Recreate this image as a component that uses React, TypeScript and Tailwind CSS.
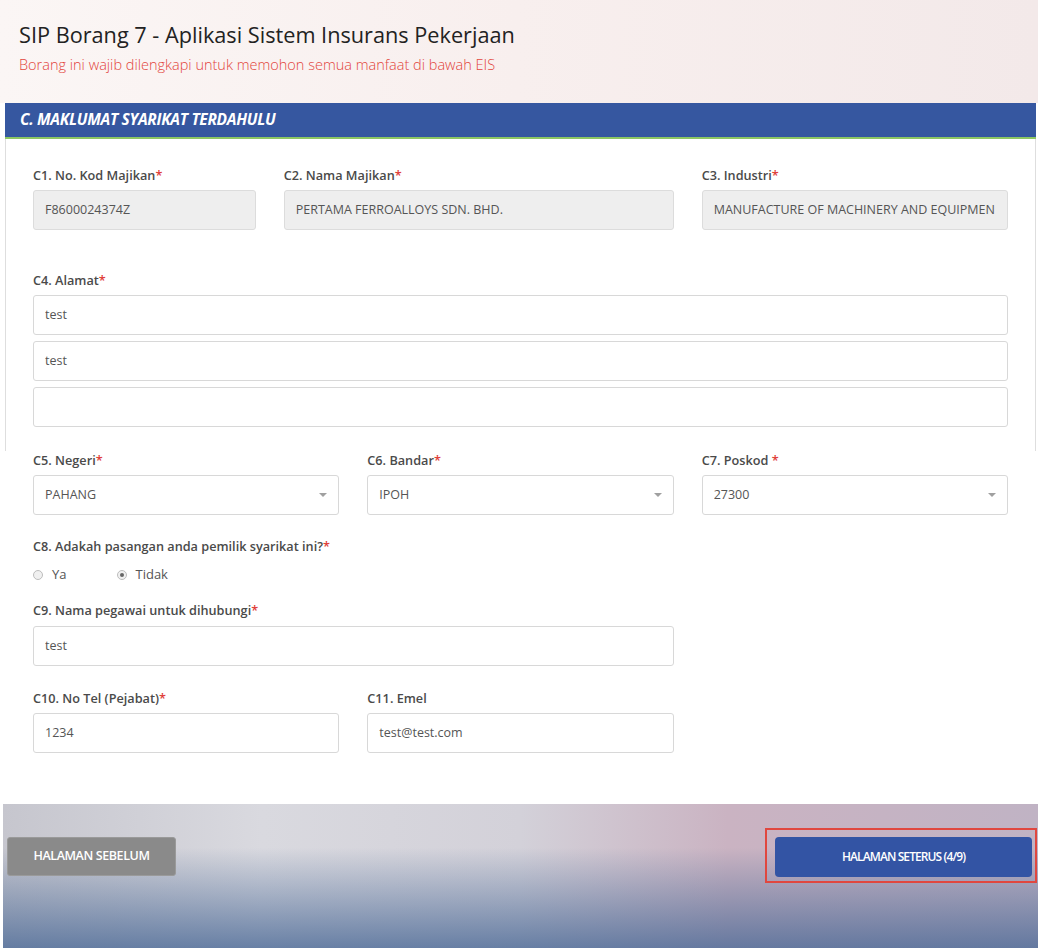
import React from 'react';

const font = { fontFamily: '"Open Sans", "Noto Sans", Arial, sans-serif' };

function Label({ text, required = true, gap = false }: { text: string; required?: boolean; gap?: boolean }) {
  return (
    <div className="text-[12.7px] leading-[18px] font-semibold text-[#4a4a4a] mb-[6px] whitespace-nowrap">
      {text}
      {required && <span className="text-[#e0403a]">{gap ? ' *' : '*'}</span>}
    </div>
  );
}

function Input({ value, disabled = false, select = false }: { value: string; disabled?: boolean; select?: boolean }) {
  return (
    <div
      className={
        'h-[40px] rounded-[3px] border flex items-center px-[11px] text-[12.5px] text-[#555] ' +
        (disabled ? 'bg-[#eeeeee] border-[#dcdcdc]' : 'bg-white border-[#d8d8d8]')
      }
    >
      <span className="flex-1 whitespace-nowrap overflow-hidden">{value}</span>
      {select && (
        <svg width="8" height="4" viewBox="0 0 8 4" className="ml-2">
          <path d="M0 0h8L4 4z" fill="#a0a0a0" />
        </svg>
      )}
    </div>
  );
}

function Radio({ label, checked = false }: { label: string; checked?: boolean }) {
  return (
    <label className="flex items-center gap-[9px] text-[13px] text-[#555]">
      <span className="w-[10px] h-[10px] rounded-full border border-[#bdbdbd] bg-[#f0f0f0] flex items-center justify-center">
        {checked && <span className="w-[4px] h-[4px] rounded-full bg-[#666]" />}
      </span>
      {label}
    </label>
  );
}

export default function App() {
  return (
    <div className="w-[1038px] min-h-[948px] bg-white" style={font}>
      {/* page header */}
      <div className="h-[103px] bg-linear-to-r from-[#fbf6f5] via-[#f8efee] to-[#f3e9e9] pt-[19px] px-[19px]">
        <h1 className="text-[21.7px] leading-[32px] text-[#222]">SIP Borang 7 - Aplikasi Sistem Insurans Pekerjaan</h1>
        <p className="text-[14.5px] leading-[20px] text-[#e2453c] font-light mt-[4px]">
          Borang ini wajib dilengkapi untuk memohon semua manfaat di bawah EIS
        </p>
      </div>

      <div className="ml-[5px] mr-[2px]">
        <div className="h-[36px] bg-[#3657a0] border-b-[2px] border-[#8dc763] flex items-center px-[15px]">
          <span className="text-white text-[15.5px] font-bold italic tracking-[-0.3px]">C. MAKLUMAT SYARIKAT TERDAHULU</span>
        </div>

        <div className="border-x border-[#dedede] px-[27px] pt-[27px] pb-[24px]">
          <div className="grid grid-cols-12 gap-x-[28px]">
            <div className="col-span-3">
              <Label text="C1. No. Kod Majikan" />
              <Input value="F8600024374Z" disabled />
            </div>
            <div className="col-span-5">
              <Label text="C2. Nama Majikan" />
              <Input value="PERTAMA FERROALLOYS SDN. BHD." disabled />
            </div>
            <div className="col-span-4">
              <Label text="C3. Industri" />
              <Input value="MANUFACTURE OF MACHINERY AND EQUIPMEN" disabled />
            </div>
          </div>

          <div className="mt-[41px]">
            <Label text="C4. Alamat" />
            <div className="flex flex-col gap-[6px]">
              <Input value="test" />
              <Input value="test" />
              <Input value="" />
            </div>
          </div>
        </div>

        <div className="px-[28px] pb-[51px]">
          <div className="grid grid-cols-12 gap-x-[28px]">
            <div className="col-span-4">
              <Label text="C5. Negeri" />
              <Input value="PAHANG" select />
            </div>
            <div className="col-span-4">
              <Label text="C6. Bandar" />
              <Input value="IPOH" select />
            </div>
            <div className="col-span-4">
              <Label text="C7. Poskod" gap />
              <Input value="27300" select />
            </div>
          </div>

          <div className="mt-[22px]">
            <Label text="C8. Adakah pasangan anda pemilik syarikat ini?" />
            <div className="flex items-center gap-[50px] mt-[10px] h-[20px]">
              <Radio label="Ya" />
              <Radio label="Tidak" checked />
            </div>
          </div>

          <div className="grid grid-cols-12 gap-x-[28px] mt-[16px]">
            <div className="col-span-8">
              <div className="pb-[1px]">
                <Label text="C9. Nama pegawai untuk dihubungi" />
              </div>
              <Input value="test" />
            </div>
          </div>

          <div className="grid grid-cols-12 gap-x-[28px] mt-[23px]">
            <div className="col-span-4">
              <Label text="C10. No Tel (Pejabat)" />
              <Input value="1234" />
            </div>
            <div className="col-span-4">
              <Label text="C11. Emel" required={false} />
              <Input value="test@test.com" />
            </div>
          </div>
        </div>
      </div>

      {/* footer navigation */}
      <div className="ml-[3px] h-[145px] bg-[linear-gradient(180deg,rgba(255,255,255,0)_30%,rgba(75,105,150,0.8)_100%),linear-gradient(90deg,#c6c6ce_0%,#d9d9df_25%,#d3d1d9_50%,#cab3c2_70%,#c0b3c4_100%)] flex items-start justify-between pt-[24px] pr-[1px]">
        <button className="mt-[9px] ml-[4px] w-[169px] h-[39px] rounded-[3px] bg-[#8a8a8a] border border-[#9a9a9a] text-white text-[12.5px] font-semibold tracking-[-0.4px]">
          HALAMAN SEBELUM
        </button>
        <div className="border-2 border-[#e0473f] pl-[8px] pr-[3px] pt-[7px] pb-[4px]">
          <button className="w-[257px] h-[40px] rounded-[4px] bg-[#3354a4] text-white text-[12px] font-semibold tracking-[-0.9px]">
            HALAMAN SETERUS (4/9)
          </button>
        </div>
      </div>
    </div>
  );
}
